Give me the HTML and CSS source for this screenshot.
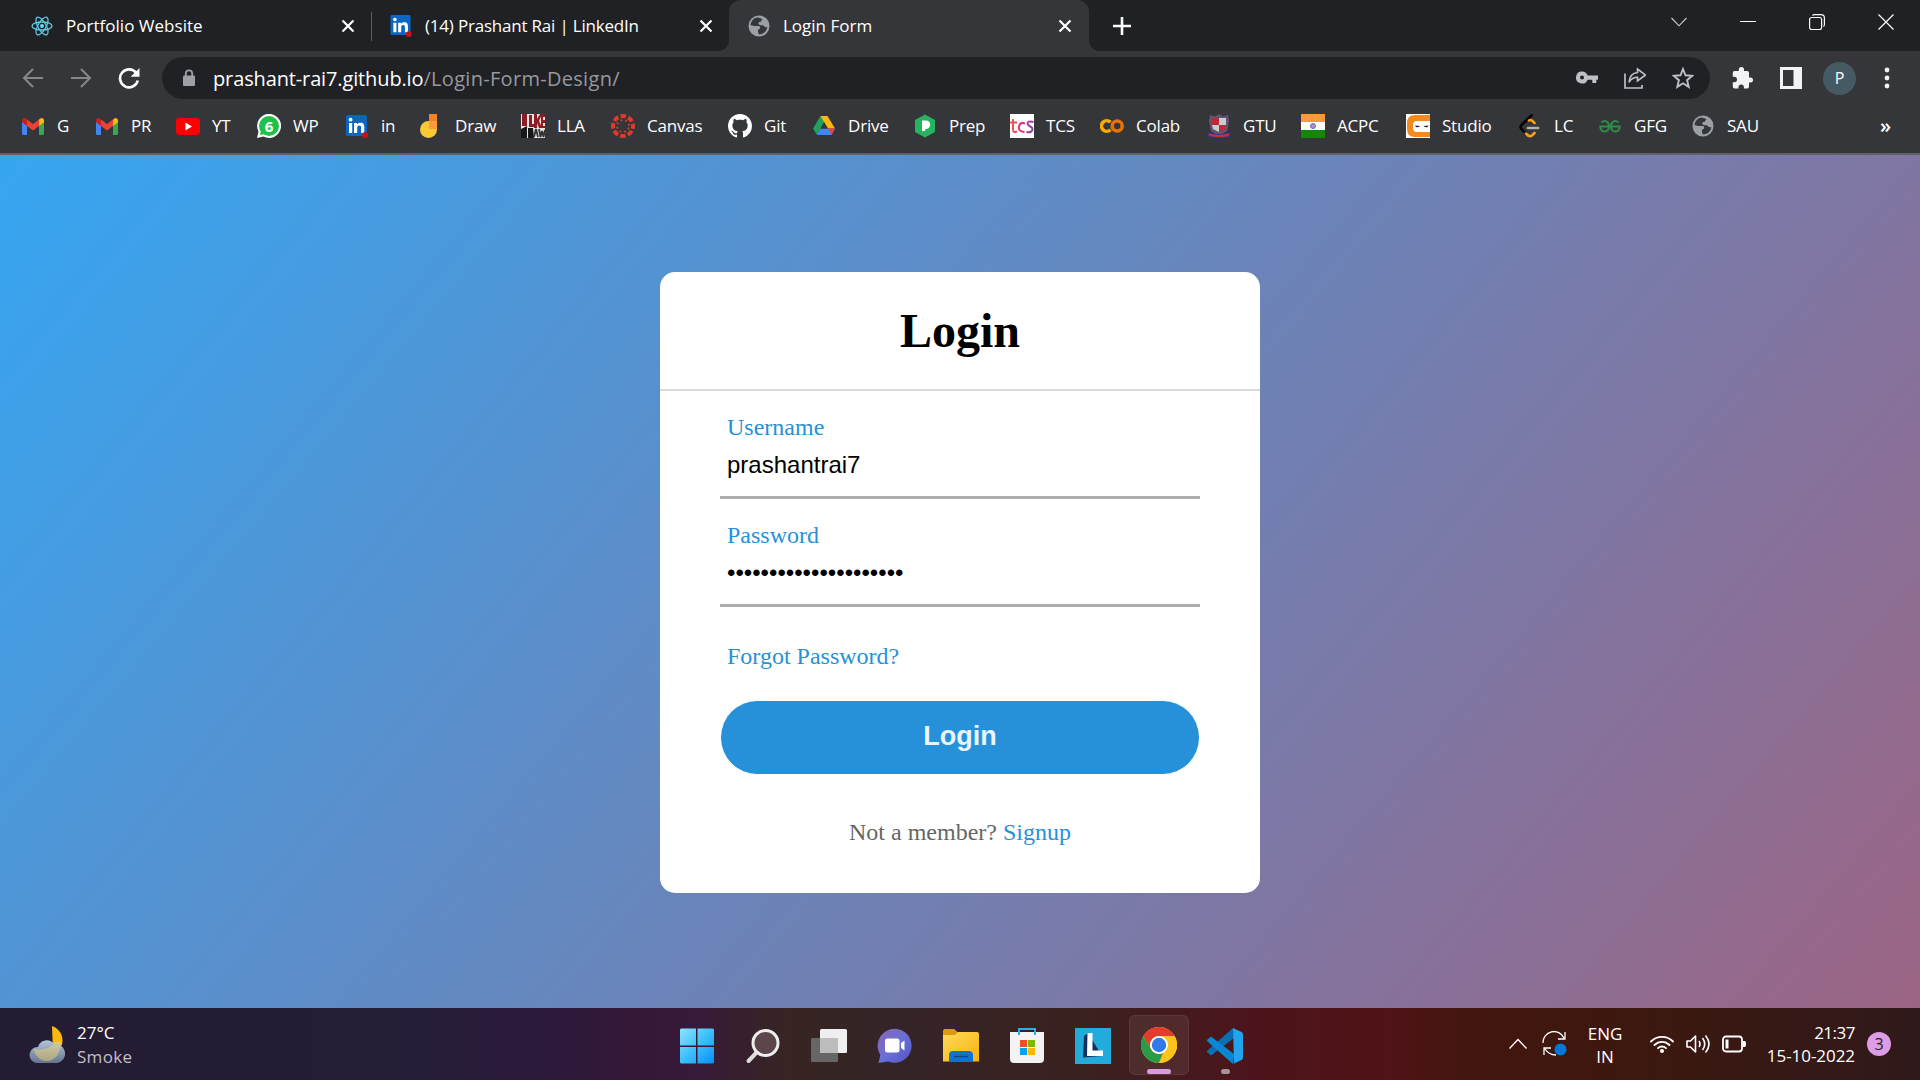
FILE: index.html
```html
<!DOCTYPE html>
<html lang="en">
<head>
<meta charset="utf-8">
<title>Login Form</title>
<link rel="stylesheet" href="styles.css">
</head>
<body>
<svg class="defs" width="0" height="0">
  <defs>
    <symbol id="close" viewBox="0 0 14 14"><path d="M1.5 1.5l11 11M12.500 1.500l-11 11" stroke="#fff" stroke-width="2.200" fill="none"/></symbol>
    <symbol id="gmail" viewBox="0 0 22 17"><path d="M0 3v12.500q0 1.500 1.500 1.500H5V6z" fill="#4285f4"/><path d="M22 3v12.500q0 1.500-1.500 1.500H17V6z" fill="#34a853"/><path d="M5 1.500l6 4.600 6-4.600V8l-6 4.600L5 8z" fill="#ea4335"/><path d="M0 2.500Q0 0 2.300 0 3.300 0 5 1.500V8L0 4.200z" fill="#c5221f"/><path d="M22 2.500Q22 0 19.700 0 18.700 0 17 1.500V8l5-3.800z" fill="#fbbc04"/></symbol>
    <symbol id="linkedin" viewBox="0 0 22 23"><rect width="21" height="21" rx="1.500" fill="#0a66c2"/><path d="M3 8h3.200v10H3zM8 8h3v1.500C12 8 13 7.700 14.500 7.700c3 0 3.800 2 3.800 4.700V18h-3.200v-5c0-1.500-.3-2.500-1.700-2.500-1.600 0-2.200 1.100-2.200 2.500v5H8z" fill="#fff"/><circle cx="4.600" cy="4.700" r="1.900" fill="#fff"/><circle cx="19.200" cy="19.900" r="3" fill="#cb1118"/></symbol>
    <symbol id="globe" viewBox="0 0 22 22"><circle cx="11" cy="11" r="10.500" fill="#9aa0a6"/><path d="M10 2.500C6 2.500 3 6 2.500 10l3.500 1h4.500c2 0 2 2.300 1 3l-1.500.8v2.400l1 2.200c4.500 0 8-3.400 8.400-7.700-1.400 1-2.400.5-3.400-.7-1-1.500-2.500-.5-4-1C9.500 9.300 10 7 12 7c1.500 0 1-2 2.500-3z" fill="#35363a"/></symbol>
  </defs>
</svg>

<header class="tabs">
  <div class="tab tab-first">
    <svg class="fav" viewBox="0 0 22 22"><g fill="none" stroke="#5cc8e4" stroke-width="1.300"><ellipse cx="11" cy="11" rx="10" ry="4"/><ellipse cx="11" cy="11" rx="10" ry="4" transform="rotate(60 11 11)"/><ellipse cx="11" cy="11" rx="10" ry="4" transform="rotate(120 11 11)"/></g><circle cx="11" cy="11" r="2" fill="#61dafb"/></svg>
    <span class="tab-title">Portfolio Website</span>
    <svg class="tab-close"><use href="#close"/></svg>
  </div>
  <div class="tab tab-second">
    <svg class="fav"><use href="#linkedin"/></svg>
    <span class="tab-title">(14) Prashant Rai | LinkedIn</span>
    <svg class="tab-close"><use href="#close"/></svg>
  </div>
  <div class="tab tab-active">
    <svg class="fav"><use href="#globe"/></svg>
    <span class="tab-title">Login Form</span>
    <svg class="tab-close"><use href="#close"/></svg>
  </div>
  <svg class="newtab" viewBox="0 0 18 18"><path d="M9 0v18M0 9h18" stroke="#fff" stroke-width="2.600"/></svg>
  <div class="winctl">
    <svg viewBox="0 0 16 16"><path d="M.5 4L8 11.800 15.500 4" fill="none" stroke="#d0d0d0" stroke-width="1.100"/></svg>
    <svg viewBox="0 0 16 16"><path d="M0 7.500h16" stroke="#fff" stroke-width="1"/></svg>
    <svg viewBox="0 0 16 16"><rect x=".6" y="3.500" width="12" height="12" rx="2" fill="none" stroke="#fff" stroke-width="1.200"/><path d="M3.500 1.500Q4 .6 5.500.6h6.500q3.400 0 3.400 3.400v6.500q0 1.500-1 2" fill="none" stroke="#fff" stroke-width="1.200"/></svg>
    <svg viewBox="0 0 16 16"><path d="M.5.5l15 15M15.500.5l-15 15" stroke="#fff" stroke-width="1.200"/></svg>
  </div>
</header>

<nav class="toolbar">
  <svg class="nav-ico" viewBox="0 0 22 22"><path d="M21 11H2.500M11 2L2 11l9 9" fill="none" stroke="#85878a" stroke-width="2"/></svg>
  <svg class="nav-ico" viewBox="0 0 22 22"><path d="M1 11h18.500M11 2l9 9-9 9" fill="none" stroke="#85878a" stroke-width="2"/></svg>
  <svg class="nav-ico" viewBox="0 0 22 22"><path d="M18.300 6A9 9 0 1 0 19.800 13.500" fill="none" stroke="#fff" stroke-width="2.600"/><path d="M21.500 1v8.800h-8.800z" fill="#fff"/></svg>
  <div class="omnibox">
    <svg class="lock" viewBox="0 0 14 18"><rect x="1" y="6.500" width="12" height="10.500" rx="1.300" fill="#9aa0a6"/><path d="M3.800 7V4.500a3.200 3.200 0 0 1 6.400 0V7" fill="none" stroke="#9aa0a6" stroke-width="1.800"/></svg>
    <span class="url"><span class="host">prashant-rai7.github.io</span><span class="path">/Login-Form-Design/</span></span>
    <svg class="omni-ico" viewBox="0 0 22 22"><path d="M6 4.500a6 6 0 0 1 5.600 4H22v4.200h-1.700V16h-4v-3.300h-4.700A6 6 0 1 1 6 4.500zm0 4a2 2 0 1 0 0 4 2 2 0 0 0 0-4z" fill="#bdc1c6" fill-rule="evenodd"/></svg>
    <svg class="omni-ico" viewBox="0 0 22 22"><path d="M1 6.500V21h17v-3" fill="none" stroke="#bdc1c6" stroke-width="1.700"/><path d="M13.500 2L21.500 8l-8 6v-3.700c-4 0-6.500 1.700-8.500 5C5.500 10 8.500 6 13.500 5.500z" fill="none" stroke="#bdc1c6" stroke-width="1.600"/></svg>
    <svg class="omni-ico" viewBox="0 0 22 22"><path d="M11 2l2.500 6.300 6.800.5-5.200 4.400 1.600 6.700L11 16.300l-5.700 3.600 1.600-6.700L1.700 8.800l6.800-.5z" fill="none" stroke="#bdc1c6" stroke-width="1.900"/></svg>
  </div>
  <svg class="tool-ico" viewBox="0 0 22 22"><path d="M18.500 10.500H17V5.800q0-1.800-1.800-1.800H12V2.600a2.600 2.600 0 0 0-5.200 0V4H2.500Q.8 4 .8 5.800v4h1.500a2.700 2.700 0 0 1 0 5.400H.8v4.500q0 1.800 1.700 1.800h4v-1.400a2.700 2.700 0 0 1 5.400 0v1.400h3.300q1.800 0 1.800-1.800v-4.200h1.500a2.500 2.500 0 0 0 0-5z" fill="#f1f3f4"/></svg>
  <svg class="tool-ico" viewBox="0 0 22 22"><path d="M0 0h22v22H0zM3 3v16h10.500V3z" fill="#f1f3f4" fill-rule="evenodd"/></svg>
  <span class="avatar">P</span>
  <svg class="dots" viewBox="0 0 6 22"><g fill="#f1f3f4"><circle cx="3" cy="3" r="2.400"/><circle cx="3" cy="11" r="2.400"/><circle cx="3" cy="19" r="2.400"/></g></svg>
</nav>

<nav class="bookmarks">
  <span class="bm"><svg viewBox="0 0 24 24"><use href="#gmail" x="1" y="4" width="22" height="17"/></svg>G</span>
  <span class="bm"><svg viewBox="0 0 24 24"><use href="#gmail" x="1" y="4" width="22" height="17"/></svg>PR</span>
  <span class="bm"><svg viewBox="0 0 24 24"><rect y="4" width="24" height="17" rx="4" fill="#f00"/><path d="M9.500 8.500v8l6.500-4z" fill="#fff"/></svg>YT</span>
  <span class="bm"><svg viewBox="0 0 24 24"><path d="M0 24l1.500-6.500A12 12 0 1 1 6.500 22.500z" fill="#fff"/><circle cx="12" cy="12" r="10" fill="#1fc14b"/><path d="M3 21l1-5 4 4z" fill="#1fc14b"/><text x="12" y="17.500" class="wp-count">6</text></svg>WP</span>
  <span class="bm"><svg viewBox="0 0 24 24"><use href="#linkedin" x="1" y="1" width="22" height="23"/></svg>in</span>
  <span class="bm"><svg viewBox="0 0 24 24"><circle cx="9.500" cy="15.500" r="8.500" fill="#fbc936"/><path d="M10 0h8v15h-8z" fill="#f58220"/><path d="M10 7h8v8h-8z" fill="#fa9b3c"/></svg>Draw</span>
  <span class="bm"><svg viewBox="0 0 24 24"><path d="M0 0h24v24H0z" fill="#e9e4e4"/><path d="M1 0h5v12H1zM8 1h3v9h2v3H8zM13 0h3v5l3-5h2l-3 7 3 7h-3l-2-5v5h-3zM20 0h4v3h-2v3h2v3h-2v3h2v2h-4z" fill="#8d1d23"/><path d="M0 15l6-3v12H0zM7 14h5l1 10H7z" fill="#17171a"/><path d="M13 23l2-8 2 8M18 15l1.500 8L21 17l1.500 6 1.500-7" fill="none" stroke="#333" stroke-width="1.800"/></svg>LLA</span>
  <span class="bm"><svg viewBox="0 0 24 24"><circle cx="12" cy="12" r="10" fill="none" stroke="#e13a2b" stroke-width="4" stroke-dasharray="5.500 2.354" stroke-dashoffset="2.750"/><circle cx="12" cy="12" r="6" fill="none" stroke="#e13a2b" stroke-width="1.800" stroke-dasharray="1.800 2.912" stroke-dashoffset="-1.500"/></svg>Canvas</span>
  <span class="bm"><svg viewBox="0 0 16 16"><path fill="#fff" d="M8 0C3.580 0 0 3.580 0 8c0 3.540 2.290 6.530 5.470 7.590.4.070.55-.17.55-.38 0-.19-.01-.82-.01-1.490-2.010.37-2.530-.49-2.690-.94-.09-.23-.48-.94-.82-1.130-.28-.15-.68-.52-.01-.53.63-.01 1.080.58 1.230.82.720 1.210 1.870.87 2.330.66.070-.52.280-.87.510-1.070-1.780-.2-3.640-.89-3.640-3.950 0-.87.310-1.590.82-2.150-.08-.2-.36-1.020.08-2.120 0 0 .67-.21 2.200.82.640-.18 1.320-.27 2-.27s1.360.09 2 .27c1.530-1.040 2.200-.82 2.200-.82.440 1.100.16 1.920.08 2.120.51.560.82 1.270.82 2.150 0 3.070-1.870 3.750-3.650 3.950.29.250.54.730.54 1.480 0 1.070-.01 1.930-.01 2.200 0 .21.150.46.550.38A8.010 8.010 0 0 0 16 8c0-4.420-3.580-8-8-8z"/></svg>Git</span>
  <span class="bm"><svg viewBox="0 0 24 24"><path d="M8.500 2h7L5 21l-4-6.500z" fill="#1fa25b"/><path d="M8.500 2h7L23 14.500h-7z" fill="#fbb70b"/><path d="M8.300 14.500H23L19.500 21H5z" fill="#4285f4"/><path d="M16 14.500h7L19.500 21z" fill="#ea4335"/><path d="M12 8.500l3.600 6H8.500z" fill="#35363a"/></svg>Drive</span>
  <span class="bm"><svg viewBox="0 0 24 24"><path d="M12 .500l10 5.500v12l-10 5.500L2 18V6z" fill="#27b45f"/><path d="M9 6.500h4a4.200 4.200 0 0 1 0 8.400h-.8V17H9z" fill="#fff"/></svg>Prep</span>
  <span class="bm"><svg viewBox="0 0 24 24"><defs><linearGradient id="tcs"><stop offset="0" stop-color="#f0644f"/><stop offset=".5" stop-color="#e0257c"/><stop offset="1" stop-color="#7a45b0"/></linearGradient></defs><path d="M0 0h24v24H0z" fill="#fff"/><path d="M3 5v11q0 3 4 1.500M0 8.500h7M15 9.500q-5-2-6 3t5.500 5.500M23.500 8q-6-1.500-6 1.500c0 3 5 2.500 5 5.500q0 4-6 3" fill="none" stroke="url(#tcs)" stroke-width="2"/></svg>TCS</span>
  <span class="bm"><svg viewBox="0 0 24 24"><g fill="none" stroke-width="3.600"><path d="M10.500 8.200A5.300 5.300 0 1 0 10.500 15.800" stroke="#f9ab00"/><circle cx="17.200" cy="12" r="5" stroke="#e8710a"/></g></svg>Colab</span>
  <span class="bm"><svg viewBox="0 0 24 24"><path d="M3 1l5 1.500L12 0l4 2.500L21 1l1 6-2 10-8 5-8-5L2 7z" fill="#62556f"/><path d="M5 4h7v7H5zM12 11h7l-1 4-6 3z" fill="#bd2835"/><path d="M12 4h7v7h-7zM5 11h7v7l-6-3z" fill="#c9cbd6"/><path d="M0 18q12 4 24 0l-2 5q-10 2-20 0z" fill="#3636a0"/><path d="M2 20.500q10 3 20 0" stroke="#d32b3a" stroke-width="2" fill="none"/></svg>GTU</span>
  <span class="bm"><svg viewBox="0 0 24 24"><path d="M0 0h24v8H0z" fill="#f93"/><path d="M0 8h24v8H0z" fill="#fff"/><path d="M0 16h24v8H0z" fill="#138808"/><circle cx="12" cy="12" r="2.500" fill="#9a9ad8" stroke="#5050b0" stroke-width=".8"/></svg>ACPC</span>
  <span class="bm"><svg viewBox="0 0 24 24"><path d="M0 0h24v24H0z" fill="#fff"/><path d="M24 1v6H11Q7 7 7 11v3q0 4 4 4h13v5H9Q1 23 1 15V9q0-8 8-8z" fill="#f28a1e"/><path d="M9 11.500l5 .5q-2 2-4 1zM22.500 11.500l-5 .5q2 2 4 1z" fill="#222"/></svg>Studio</span>
  <span class="bm"><svg viewBox="0 0 24 24"><g fill="none" stroke-linecap="round" stroke-width="2.600"><path d="M13.500 1.500L4 10.500q-3 2.500 0 5L7.500 19" stroke="#000"/><path d="M11 6.500q1.500-1 3 0l2.500 2.500M8 19.500q3 4 6 2l2.500-2.500" stroke="#ffa116"/><path d="M10 14h10" stroke="#b3b3b3"/></g></svg>LC</span>
  <span class="bm"><svg viewBox="0 0 24 24"><g fill="none" stroke="#2f8d46" stroke-width="2"><path d="M3.500 8.500C7 5 11 8 11 12.500 11 18 5 19 3 15.500q-.8-1.500-.7-3H21.700q.1 1.500-.7 3C19 19 13 18 13 12.500 13 8 17 5 20.500 8.500"/></g></svg>GFG</span>
  <span class="bm"><svg viewBox="0 0 24 24"><use href="#globe" x="1" y="1" width="22" height="22"/></svg>SAU</span>
  <span class="more">»</span>
</nav>

<main class="page">
  <section class="card">
    <h1>Login</h1>
    <div class="form">
      <div class="field"><label>Username</label><div class="value">prashantrai7</div></div>
      <div class="field"><label>Password</label><div class="value">•••••••••••••••••••••</div></div>
      <a class="forgot">Forgot Password?</a>
      <button class="submit">Login</button>
      <p class="signup">Not a member? <a>Signup</a></p>
    </div>
  </section>
</main>

<footer class="taskbar">
  <div class="weather">
    <svg viewBox="0 0 36 38"><defs><linearGradient id="cl" x1="0" y1="0" x2="0" y2="1"><stop offset="0" stop-color="#b4c4dc"/><stop offset="1" stop-color="#66758f"/></linearGradient><linearGradient id="mo" x1="0" y1="0" x2="0" y2="1"><stop offset="0" stop-color="#d4cb9c"/><stop offset="1" stop-color="#b9ad80"/></linearGradient></defs><path d="M23 0C31 3 35 10 33 19l-9 6z" fill="#fdb90b"/><path d="M8 37a8 8 0 0 1 1-16 9 9 0 0 1 16-3 9.500 9.500 0 0 1 3 19z" fill="url(#cl)"/><path d="M5 23c5 1 16 1 21-7q4-1 6 1c0 11-7 18-14 18S6 30 5 23z" fill="url(#mo)" opacity=".85"/></svg>
    <div class="weather-text"><span>27°C</span><span class="dim">Smoke</span></div>
  </div>
  <div class="apps">
    <span><svg viewBox="0 0 36 36"><defs><linearGradient id="win" x1="0" y1="0" x2="1" y2="1"><stop offset="0" stop-color="#8fe3fd"/><stop offset=".5" stop-color="#3cc0fb"/><stop offset="1" stop-color="#0690f8"/></linearGradient></defs><path d="M2 .5h15v17H1v-16zM18.500.5H34l1 1v16H18.500zM1 19h16v16.500H2l-1-1zM18.500 19H35v15.500l-1 1H18.500z" fill="url(#win)"/></svg></span>
    <span><svg viewBox="0 0 36 36"><path d="M13 23L3.500 33" stroke="#dcdcdc" stroke-width="4" stroke-linecap="round"/><circle cx="20.500" cy="15" r="12.500" fill="#5c454b" stroke="#eee" stroke-width="3"/></svg></span>
    <span><svg viewBox="0 0 36 36"><rect x="9" y="1" width="27" height="24" rx="1.500" fill="#efefef"/><rect y="10" width="27" height="24" rx="1.500" fill="#666"/><path d="M9 10h18v15H9z" fill="#bcbcbc"/></svg></span>
    <span><svg viewBox="0 0 36 36"><defs><linearGradient id="chat" x1="0" y1="0" x2="1" y2="1"><stop offset="0" stop-color="#8c63b0"/><stop offset=".5" stop-color="#6a70d6"/><stop offset="1" stop-color="#5252c4"/></linearGradient></defs><path d="M1.500 35l1.800-8A17 17 0 1 1 11 33.500z" fill="url(#chat)"/><rect x="8" y="10.500" width="14.500" height="14" rx="2.500" fill="#fff"/><path d="M24 15l3.500-2.500v10L24 20z" fill="#fff"/></svg></span>
    <span><svg viewBox="0 0 36 36"><defs><linearGradient id="fo" x1="0" y1="0" x2="1" y2="1"><stop offset="0" stop-color="#ffd95a"/><stop offset="1" stop-color="#f7b40e"/></linearGradient></defs><path d="M0 3q0-2 2-2h9l4 3.500h19V12H0z" fill="#dd9a0c"/><path d="M0 7h12l3-3h19q2 0 2 2v27.500H0z" fill="url(#fo)"/><path d="M6 34V27q0-4 4-4h16q4 0 4 4v7z" fill="#1173c8"/><path d="M11 28.500h14" stroke="#07488c" stroke-width="1.500"/></svg></span>
    <span><svg viewBox="0 0 36 36"><path d="M1 4h34v27q0 4-4 4H5q-4 0-4-4z" fill="#f3f3f3"/><path d="M10 7V1h16v6" fill="none" stroke="#27b0ee" stroke-width="2"/><path d="M11 12h7v7h-7z" fill="#f04e23"/><path d="M19 12h7v7h-7z" fill="#7db900"/><path d="M11 20h7v7h-7z" fill="#03a2ee"/><path d="M19 20h7v7h-7z" fill="#fdb800"/></svg></span>
    <span><svg viewBox="0 0 36 36"><path d="M0 0h36v36H0z" fill="#23acdb"/><path d="M13 5l-4 3-1 21.500L27 28z" fill="#12305c"/><path d="M12.500 5h5v17.500H28V28H12z" fill="#fff"/></svg></span>
    <span class="app-active"><svg viewBox="0 0 36 36"><circle cx="18" cy="18" r="18" fill="#fcc31e"/><path d="M2.400 9A18 18 0 0 1 33.600 9H18a9 9 0 0 0-7.800 13.500z" fill="#e43b2e"/><path d="M2.400 9l7.800 13.500A9 9 0 0 0 22 26l-4 10A18 18 0 0 1 2.400 9z" fill="#2a9b47"/><path d="M18 36l7.800-13.500A9 9 0 0 0 25 12l-.5-3h9.100A18 18 0 0 1 18 36z" fill="#fcc31e"/><circle cx="18" cy="18" r="9" fill="#fff"/><circle cx="18" cy="18" r="7.200" fill="#3079ea"/></svg><i class="run wide"></i></span>
    <span class="app-run"><svg viewBox="0 0 36 36"><path d="M27 10L4 27.500.5 24.500q-1-1 0-2L26 0z" fill="#0a70b5"/><path d="M27 26L4 8.500.5 11.500q-1 1 0 2L26 36z" fill="#0b86d0"/><path d="M26 0l8.500 4q1.500.7 1.500 2.500v23q0 1.800-1.500 2.500L26 36l1-1z" fill="#22a3ee"/></svg><i class="run"></i></span>
  </div>
  <div class="tray">
    <svg class="chev" viewBox="0 0 18 12"><path d="M.5 10.500L9 1.500l8.500 9" fill="none" stroke="#fff" stroke-width="1.400"/></svg>
    <svg class="sync" viewBox="0 0 26 26"><path d="M1 12A11 11 0 0 1 22 7M23 1v7h-7M2 24v-7h7M3 18q4 6 11 6" fill="none" stroke="#fff" stroke-width="1.300"/><circle cx="18.500" cy="18.500" r="6" fill="#0078d7"/></svg>
    <div class="lang"><span>ENG</span><span>IN</span></div>
    <div class="status">
      <svg viewBox="0 0 24 20"><g fill="none" stroke="#fff" stroke-width="1.800" stroke-linecap="round"><path d="M1 7.500a15.500 15.500 0 0 1 22 0M4.500 11a10.600 10.600 0 0 1 15 0M8 14.200a5.600 5.600 0 0 1 8 0"/></g><circle cx="12" cy="17" r="2" fill="#fff"/></svg>
      <svg viewBox="0 0 24 20"><path d="M1 7h3.500L9.500 2v16l-5-5H1zM13 7q2 3 0 6M16.500 4q4.500 6 0 12M19.500 1.500q7 8.500 0 17" fill="none" stroke="#fff" stroke-width="1.600" stroke-linejoin="round"/></svg>
      <svg viewBox="0 0 24 20"><rect x="1" y="2.500" width="19" height="15" rx="3" fill="none" stroke="#fff" stroke-width="1.800"/><path d="M3.500 5.500h3v9h-3z" fill="#fff"/><path d="M21 7h1.500q1.500 0 1.500 3t-1.500 3H21z" fill="#fff"/></svg>
    </div>
    <div class="clock"><span class="time">21:37</span><span>15-10-2022</span></div>
    <span class="badge">3</span>
  </div>
</footer>
</body>
</html>
```
FILE: styles.css
```css
* { box-sizing: border-box; }
body {
  margin: 0;
  width: 1920px;
  height: 1080px;
  overflow: hidden;
  display: flex;
  flex-direction: column;
  font-family: "Segoe UI", "Open Sans", "Noto Sans", sans-serif;
  font-size: 17px;
  color: #fff;
  background: #202124;
}
svg { display: block; flex: none; }
.defs { position: absolute; }

/* tab strip */
.tabs { height: 51px; display: flex; align-items: stretch; background: #202124; }
.tab { display: flex; align-items: center; }
.tab-first { width: 372px; padding: 0 17px 0 31px; position: relative; }
.tab-first .tab-title { letter-spacing: 0.02px; }
.tab-first::after { content: ""; position: absolute; right: 0; top: 12px; width: 1px; height: 29px; background: #5b5d61; }
.tab-second { width: 357px; padding: 0 16px 0 18px; }
.tab-second .tab-title { letter-spacing: -0.2px; }
.tab-active {
  width: 360px;
  padding: 0 17px 0 19px;
  background: #35363a;
  border-radius: 12px 12px 0 0;
  position: relative;
}
.tab-active::before, .tab-active::after {
  content: "";
  position: absolute;
  bottom: 0;
  width: 10px;
  height: 10px;
}
.tab-active::before { left: -10px; background: radial-gradient(circle at 0 0, #202124 9.500px, #35363a 10px); }
.tab-active::after { right: -10px; background: radial-gradient(circle at 100% 0, #202124 9.500px, #35363a 10px); }
.fav { width: 22px; height: 22px; margin-right: 13px; }
.tab-title { letter-spacing: 0; white-space: nowrap; }
.tab-close { width: 14px; height: 14px; margin-left: auto; }
.newtab { width: 18px; height: 18px; margin: 17px 0 0 24px; }
.winctl { margin-left: auto; display: flex; gap: 53px; padding: 14px 26px 0 0; }
.winctl svg { width: 16px; height: 16px; }

/* toolbar */
.toolbar { height: 54px; display: flex; align-items: center; background: #35363a; padding-left: 22px; }
.nav-ico { width: 22px; height: 22px; margin-right: 26px; }
.nav-ico + .nav-ico + .nav-ico { margin-right: 22px; }
.omnibox {
  width: 1548px;
  height: 42px;
  border-radius: 21px;
  background: #202124;
  display: flex;
  align-items: center;
  padding: 0 16px 0 20px;
  gap: 26px;
}
.lock { width: 14px; height: 18px; margin-right: -9px; }
.url { font-size: 20px; flex: 1; white-space: nowrap; }
.host { letter-spacing: -0.13px; }
.path { color: #96999e; letter-spacing: 0.3px; }
.omni-ico { width: 22px; height: 22px; }
.tool-ico { width: 22px; height: 22px; margin-left: 22px; }
.tool-ico + .tool-ico { margin-left: 26px; }
.avatar {
  width: 33px;
  height: 33px;
  margin-left: 21px;
  border-radius: 50%;
  background: #455a64;
  display: grid;
  place-items: center;
  font-size: 16px;
}
.dots { width: 6px; height: 22px; margin-left: 28px; }

/* bookmarks bar */
.bookmarks {
  height: 50px;
  padding: 0 0 7px 21px;
  border-bottom: 2px solid #606165;
  background: #35363a;
  display: grid;
  align-items: center;
  grid-template-columns: 74px 81px 81px 88px 74px 102px 90px 117px 84px 101px 97px 90px 107px 94px 105px 112px 80px 93px 189px auto;
}
.bm { display: flex; align-items: center; gap: 12px; white-space: nowrap; letter-spacing: -0.2px; }
.bm svg { width: 24px; height: 24px; }
.wp-count { font: bold 15px "Open Sans", sans-serif; fill: #fff; text-anchor: middle; }
.more { font-size: 20px; font-weight: 600; line-height: 20px; }

/* page */
.page {
  height: 853px;
  background: linear-gradient(130deg, #36a6f2, #9c6484);
  display: flex;
  justify-content: center;
  align-items: flex-start;
  padding-top: 116.500px;
}
.card {
  width: 600px;
  height: 621px;
  background: #fff;
  border-radius: 15px;
  font-family: "Liberation Serif", "Times New Roman", serif;
  font-size: 24px;
  color: #666;
}
.card h1 {
  margin: 0;
  height: 119.500px;
  border-bottom: 2px solid #dadada;
  line-height: 118px;
  font-size: 48px;
  text-align: center;
  color: #000;
}
.form { padding: 0 60px; display: flex; flex-direction: column; }
.field { height: 108px; border-bottom: 3px solid #adadad; padding: 21px 7px 0; }
.field:first-child { height: 107.500px; }
.field label, .form a { color: #2691d9; }
.field label { display: block; line-height: 30px; }
.value {
  font-family: "Liberation Sans", Arial, sans-serif;
  line-height: 28px;
  margin-top: 9px;
  color: #000;
}
.form .forgot { margin: 34px 7px 0; line-height: 30px; }
.submit {
  height: 75px;
  margin: 29.500px 0 0;
  border: 1px solid #fff;
  border-radius: 38px;
  background: #2691d9;
  color: #e9f4fb;
  font: bold 27px "Liberation Sans", Arial, sans-serif;
  padding: 0 0 3px;
}
.signup { margin: 42px 0 0; text-align: center; line-height: 30px; }

/* taskbar */
.taskbar {
  height: 72px;
  display: grid;
  grid-template-columns: 664px 594px 1fr;
  background: linear-gradient(90deg, #231c32 0, #251d37 420px, #2b193c 540px, #351737 640px, #37193a 690px, #372523 790px, #352427 900px, #3b211f 1090px, #4b151b 1240px, #501317 1390px, #42160f 1480px, #3c180f 1640px, #30191b 1920px);
}
.weather { display: flex; align-items: center; padding: 0 0 1px 29px; gap: 12px; }
.weather svg { width: 36px; height: 38px; margin-top: 3px; }
.weather-text { display: flex; flex-direction: column; line-height: 24px; margin-top: 3px; }
.dim { color: #c2bfc8; letter-spacing: 0.3px; }
.apps { display: grid; grid-template-columns: repeat(9, 66px); }
.apps span { display: flex; justify-content: center; padding-top: 20px; position: relative; }
.apps svg { width: 36px; height: 36px; }
.apps .app-active {
  width: 60px;
  height: 60px;
  margin: 7px 0 0 3px;
  padding-top: 12px;
  border-radius: 6px;
  background: rgba(255, 255, 255, 0.07);
  box-shadow: inset 0 0 0 1px rgba(255, 255, 255, 0.07);
}
.run { position: absolute; bottom: 6px; width: 9px; height: 5px; border-radius: 3px; background: #a79398; }
.run.wide { bottom: 1px; width: 24px; background: #d99be0; }
.tray { display: flex; align-items: center; padding-left: 251px; }
.chev { width: 18px; height: 12px; }
.sync { width: 26px; height: 26px; margin-left: 15px; }
.lang { width: 40px; margin: 1px 0 0 17px; text-align: center; display: flex; flex-direction: column; line-height: 23px; }
.status { display: flex; gap: 12px; margin-left: 25px; }
.status svg { width: 24px; height: 20px; }
.clock { width: 102px; margin: -1px 0 0 7px; text-align: right; display: flex; flex-direction: column; line-height: 23px; letter-spacing: -0.05px; white-space: nowrap; }
.time { letter-spacing: -0.5px; }
.badge {
  width: 24px;
  height: 24px;
  margin-left: 12px;
  border-radius: 50%;
  background: #dc9de6;
  color: #222;
  display: grid;
  place-items: center;
  font-size: 16px;
}
```
